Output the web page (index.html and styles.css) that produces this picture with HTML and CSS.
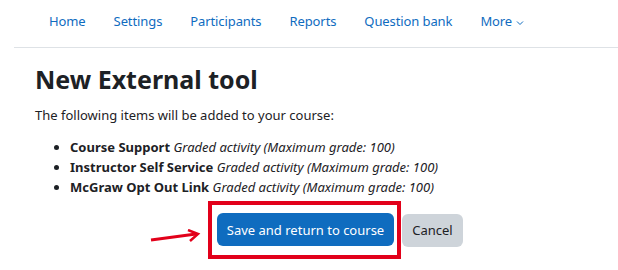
FILE: index.html
```html
<!DOCTYPE html>
<html lang="en">
<head>
  <meta charset="UTF-8">
  <title>New External tool</title>
  <link rel="stylesheet" href="styles.css">
</head>
<body>
<nav class="secondary-nav">
  <a href="#">Home</a>
  <a href="#">Settings</a>
  <a href="#">Participants</a>
  <a href="#">Reports</a>
  <a href="#">Question bank</a>
  <a href="#" class="more">More
    <svg width="8" height="6" viewBox="0 0 8 6"><path d="M1 1.5 L4 4.5 L7 1.5" fill="none" stroke="#0f6cbf" stroke-width="1"/></svg>
  </a>
</nav>

<div class="main">
  <h1>New External tool</h1>
  <p>The following items will be added to your course:</p>
  <ul class="items">
    <li><b>Course Support</b> <i>Graded activity (Maximum grade: 100)</i></li>
    <li><b>Instructor Self Service</b> <i>Graded activity (Maximum grade: 100)</i></li>
    <li><b>McGraw Opt Out Link</b> <i>Graded activity (Maximum grade: 100)</i></li>
  </ul>

  <div class="actions">
    <svg class="arrow" width="52" height="14" viewBox="0 0 52 14">
      <path d="M1 11 L46 5" stroke="#e2001a" stroke-width="3" fill="none"/>
      <path d="M38 1 L48 5 L40 12" stroke="#e2001a" stroke-width="2.5" fill="none"/>
    </svg>
    <div class="highlight">
      <button class="btn-primary">Save and return to course</button>
    </div>
    <button class="btn-secondary">Cancel</button>
  </div>
</div>
</body>
</html>
```

FILE: styles.css
```css
body {
  margin: 0;
  font-family: "Noto Sans", sans-serif;
  color: #1d2125;
  background: white;
}
.secondary-nav {
  display: flex;
  align-items: center;
  gap: 28px;
  height: 47px;
  margin-left: 14px;
  padding-left: 35px;
  border-bottom: 1px solid #dee2e6;
}
.secondary-nav a {
  color: #0f6cbf;
  text-decoration: none;
  font-size: 13px;
  letter-spacing: -0.1px;
  margin-top: -5px;
}
.more svg {
  margin-left: 1px;
  vertical-align: middle;
}
.main {
  padding: 0 35px;
}
h1 {
  font-size: 25px;
  font-weight: bold;
  margin: 14px 0 0 0;
  line-height: 34px;
}
p {
  font-size: 13px;
  margin: 10px 0 0 0;
}
.items {
  margin: 13px 0 0 0;
  padding-left: 35px;
  font-size: 13px;
  line-height: 20px;
}
.actions {
  display: flex;
  align-items: center;
  margin-top: 4px;
  margin-left: 115px;
}
.arrow {
  margin-top: 12px;
  margin-right: 6px;
}
.highlight {
  border: 4px solid #e2001a;
  padding: 8px 3px 9px 5px;
}
button {
  font-family: "Noto Sans", sans-serif;
  font-size: 13px;
  border: none;
  border-radius: 6px;
  height: 33px;
  padding: 0 8px;
  white-space: nowrap;
}
.btn-primary {
  background-color: #0f6cbf;
  color: white;
  width: 177px;
}
.btn-secondary {
  background-color: #ced4da;
  color: #1d2125;
  width: 61px;
  margin-left: 1px;
}
```
